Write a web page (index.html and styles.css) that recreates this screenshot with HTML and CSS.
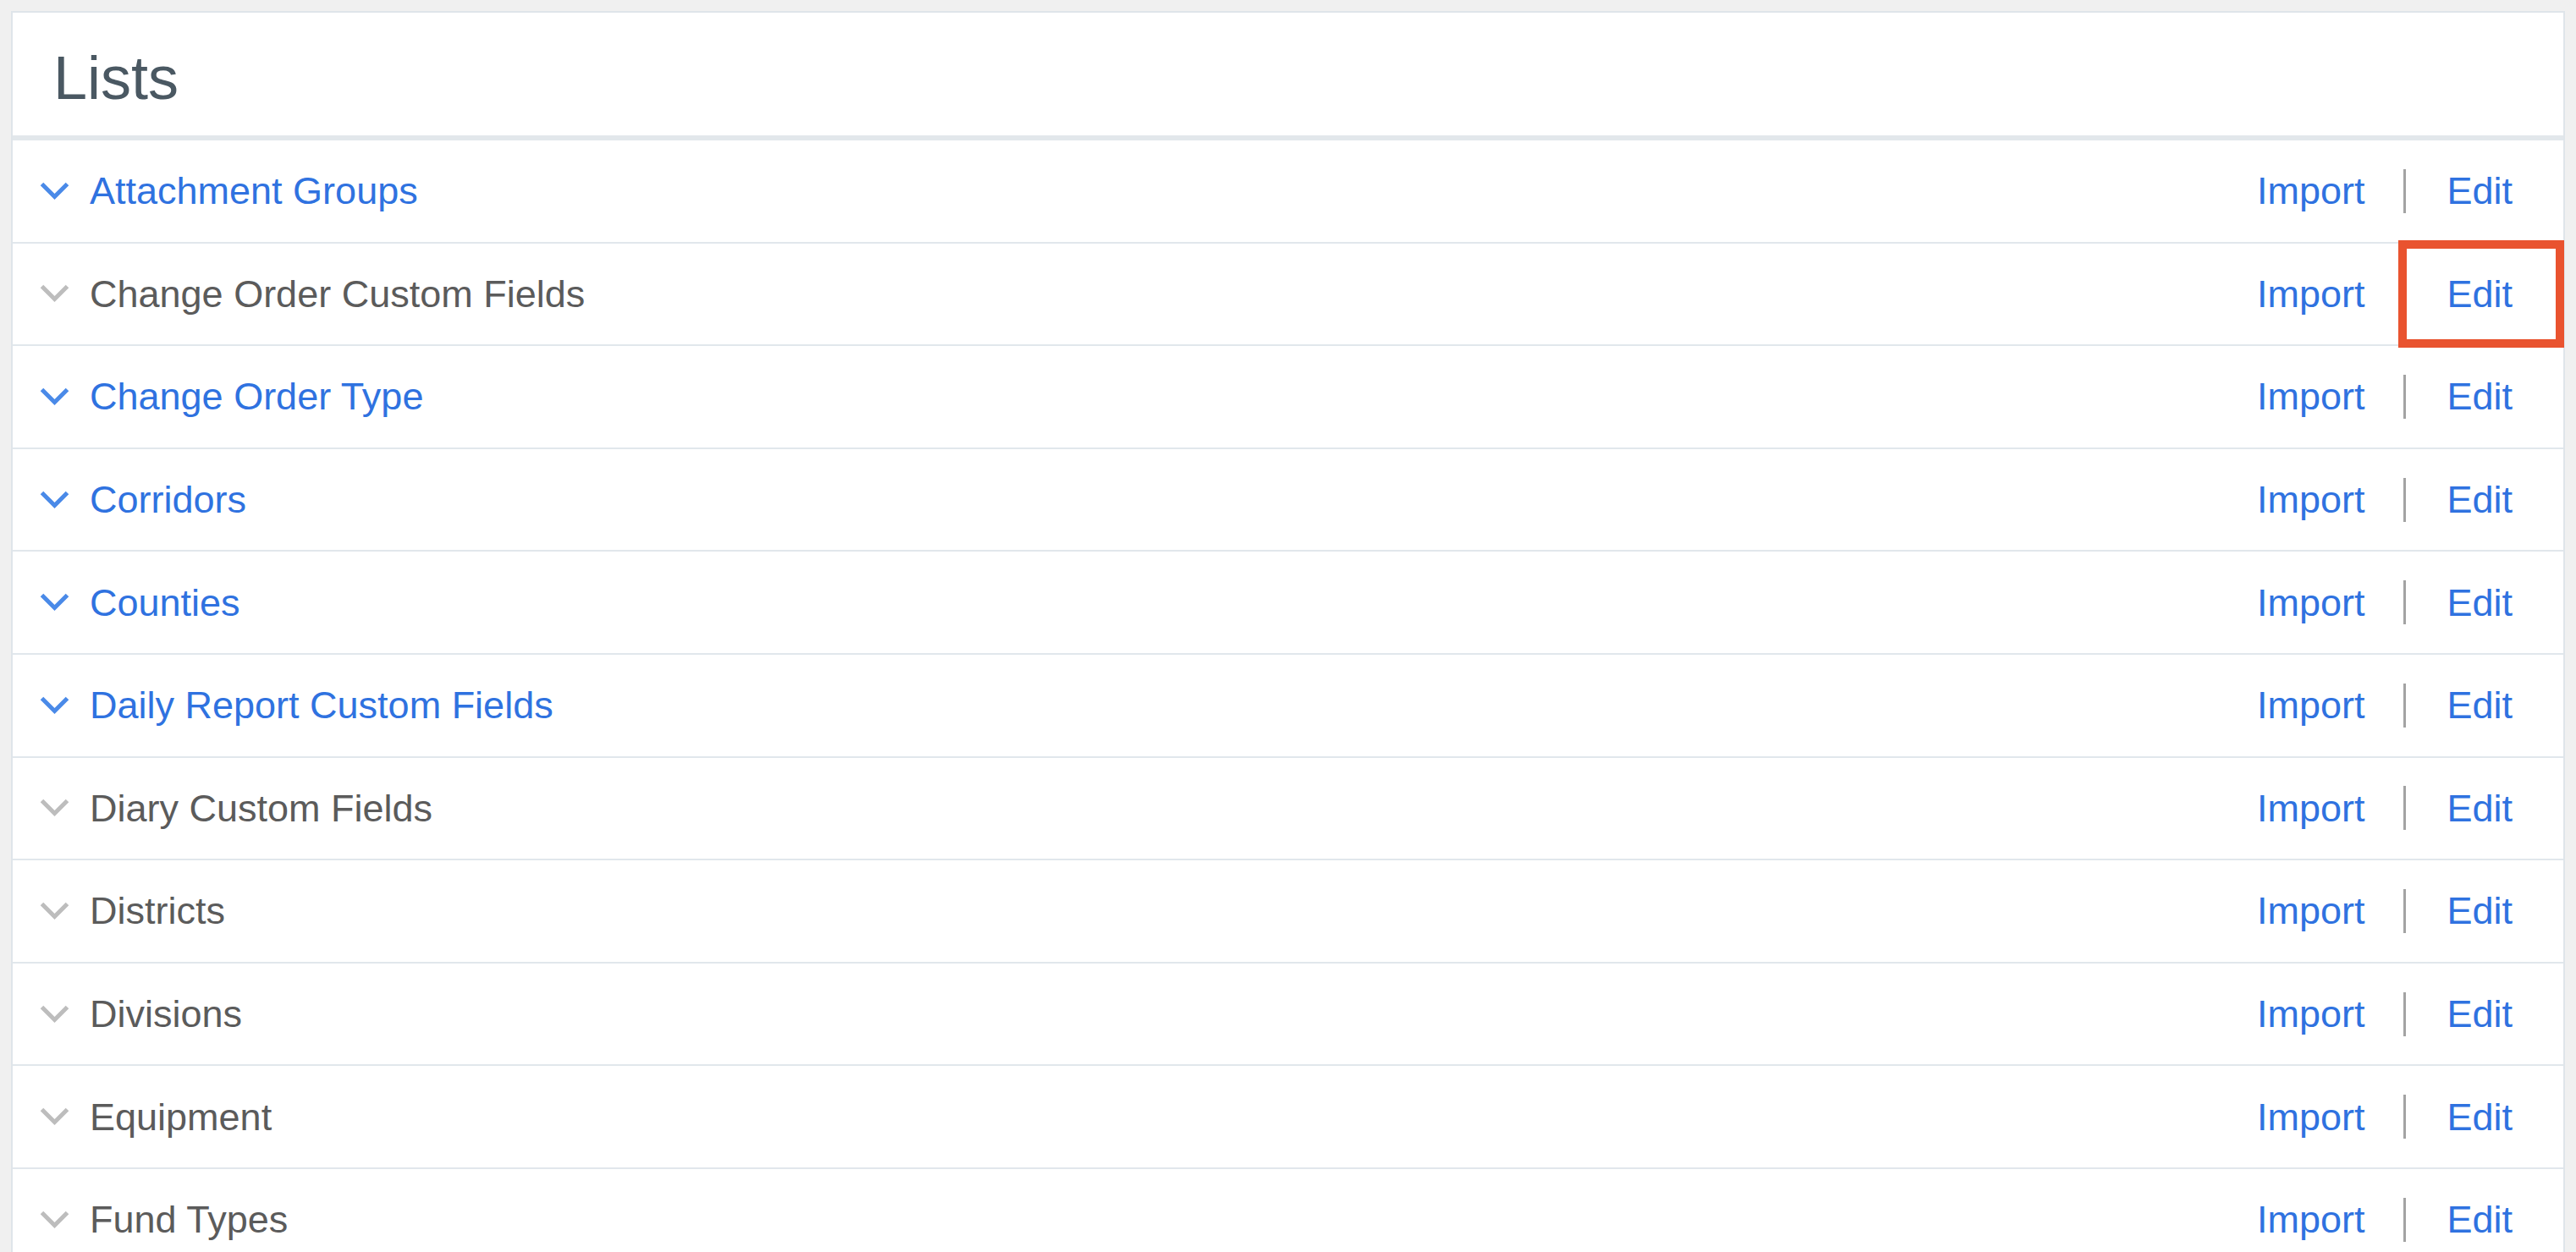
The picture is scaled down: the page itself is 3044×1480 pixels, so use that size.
FILE: index.html
```html
<!DOCTYPE html>
<html lang="en">
<head>
<meta charset="utf-8">
<title>Lists</title>
<link rel="stylesheet" href="styles.css">
</head>
<body>
<div class="panel">
  <div class="panel-header"><h1 class="title">Lists</h1></div>
  <ul class="list">
    <li class="row active">
      <span class="label"><svg class="chev" viewBox="0 0 41 24"><polyline points="5.5,3.5 20.5,18.5 35.5,3.5"/></svg>Attachment Groups</span>
      <span class="actions"><a class="link">Import</a><span class="sep"></span><a class="link">Edit</a></span>
    </li>
    <li class="row">
      <span class="label"><svg class="chev" viewBox="0 0 41 24"><polyline points="5.5,3.5 20.5,18.5 35.5,3.5"/></svg>Change Order Custom Fields</span>
      <span class="actions"><a class="link">Import</a><span class="sep"></span><a class="link">Edit</a></span>
      <span class="highlight"></span>
    </li>
    <li class="row active">
      <span class="label"><svg class="chev" viewBox="0 0 41 24"><polyline points="5.5,3.5 20.5,18.5 35.5,3.5"/></svg>Change Order Type</span>
      <span class="actions"><a class="link">Import</a><span class="sep"></span><a class="link">Edit</a></span>
    </li>
    <li class="row active">
      <span class="label"><svg class="chev" viewBox="0 0 41 24"><polyline points="5.5,3.5 20.5,18.5 35.5,3.5"/></svg>Corridors</span>
      <span class="actions"><a class="link">Import</a><span class="sep"></span><a class="link">Edit</a></span>
    </li>
    <li class="row active">
      <span class="label"><svg class="chev" viewBox="0 0 41 24"><polyline points="5.5,3.5 20.5,18.5 35.5,3.5"/></svg>Counties</span>
      <span class="actions"><a class="link">Import</a><span class="sep"></span><a class="link">Edit</a></span>
    </li>
    <li class="row active">
      <span class="label"><svg class="chev" viewBox="0 0 41 24"><polyline points="5.5,3.5 20.5,18.5 35.5,3.5"/></svg>Daily Report Custom Fields</span>
      <span class="actions"><a class="link">Import</a><span class="sep"></span><a class="link">Edit</a></span>
    </li>
    <li class="row">
      <span class="label"><svg class="chev" viewBox="0 0 41 24"><polyline points="5.5,3.5 20.5,18.5 35.5,3.5"/></svg>Diary Custom Fields</span>
      <span class="actions"><a class="link">Import</a><span class="sep"></span><a class="link">Edit</a></span>
    </li>
    <li class="row">
      <span class="label"><svg class="chev" viewBox="0 0 41 24"><polyline points="5.5,3.5 20.5,18.5 35.5,3.5"/></svg>Districts</span>
      <span class="actions"><a class="link">Import</a><span class="sep"></span><a class="link">Edit</a></span>
    </li>
    <li class="row">
      <span class="label"><svg class="chev" viewBox="0 0 41 24"><polyline points="5.5,3.5 20.5,18.5 35.5,3.5"/></svg>Divisions</span>
      <span class="actions"><a class="link">Import</a><span class="sep"></span><a class="link">Edit</a></span>
    </li>
    <li class="row">
      <span class="label"><svg class="chev" viewBox="0 0 41 24"><polyline points="5.5,3.5 20.5,18.5 35.5,3.5"/></svg>Equipment</span>
      <span class="actions"><a class="link">Import</a><span class="sep"></span><a class="link">Edit</a></span>
    </li>
    <li class="row">
      <span class="label"><svg class="chev" viewBox="0 0 41 24"><polyline points="5.5,3.5 20.5,18.5 35.5,3.5"/></svg>Fund Types</span>
      <span class="actions"><a class="link">Import</a><span class="sep"></span><a class="link">Edit</a></span>
    </li>
  </ul>
</div>
</body>
</html>
```

FILE: styles.css
```css
html, body {
  margin: 0;
  padding: 0;
  background: #f0f0f0;
}
body {
  padding: 13px;
  font-family: "Liberation Sans", Arial, Helvetica, sans-serif;
}
.panel {
  background: #ffffff;
  border: 2px solid #dfe5ea;
}
.panel-header {
  height: 104px;
  padding: 41px 0 0 48px;
  border-bottom: 6px solid #e2e7eb;
}
.title {
  margin: 0;
  font-size: 72px;
  line-height: 72px;
  font-weight: normal;
  color: #4a5862;
}
.list {
  list-style: none;
  margin: 0;
  padding: 0;
}
.row {
  position: relative;
  height: 119.6px;
  border-bottom: 2px solid #e1e7ec;
  display: flex;
  align-items: center;
  justify-content: space-between;
  padding: 0 60px 0 29px;
  font-size: 45px;
  line-height: 45px;
}
.label {
  display: flex;
  align-items: center;
  color: #5b5b5b;
}
.chev {
  width: 41px;
  height: 24px;
  margin-right: 21px;
  fill: none;
  stroke: #bdbdbd;
  stroke-width: 5;
}
.row.active .label {
  color: #2f72e0;
}
.row.active .chev {
  stroke: #4a8ae8;
}
.actions {
  display: flex;
  align-items: center;
}
.link {
  color: #2f72e0;
  cursor: pointer;
}
.sep {
  width: 3px;
  height: 52px;
  background: #a3a3a3;
  margin: 0 48px 0 46px;
}
.highlight {
  position: absolute;
  right: -1px;
  top: -4px;
  width: 196px;
  height: 127px;
  box-sizing: border-box;
  border: 10px solid #e9532f;
}
```
